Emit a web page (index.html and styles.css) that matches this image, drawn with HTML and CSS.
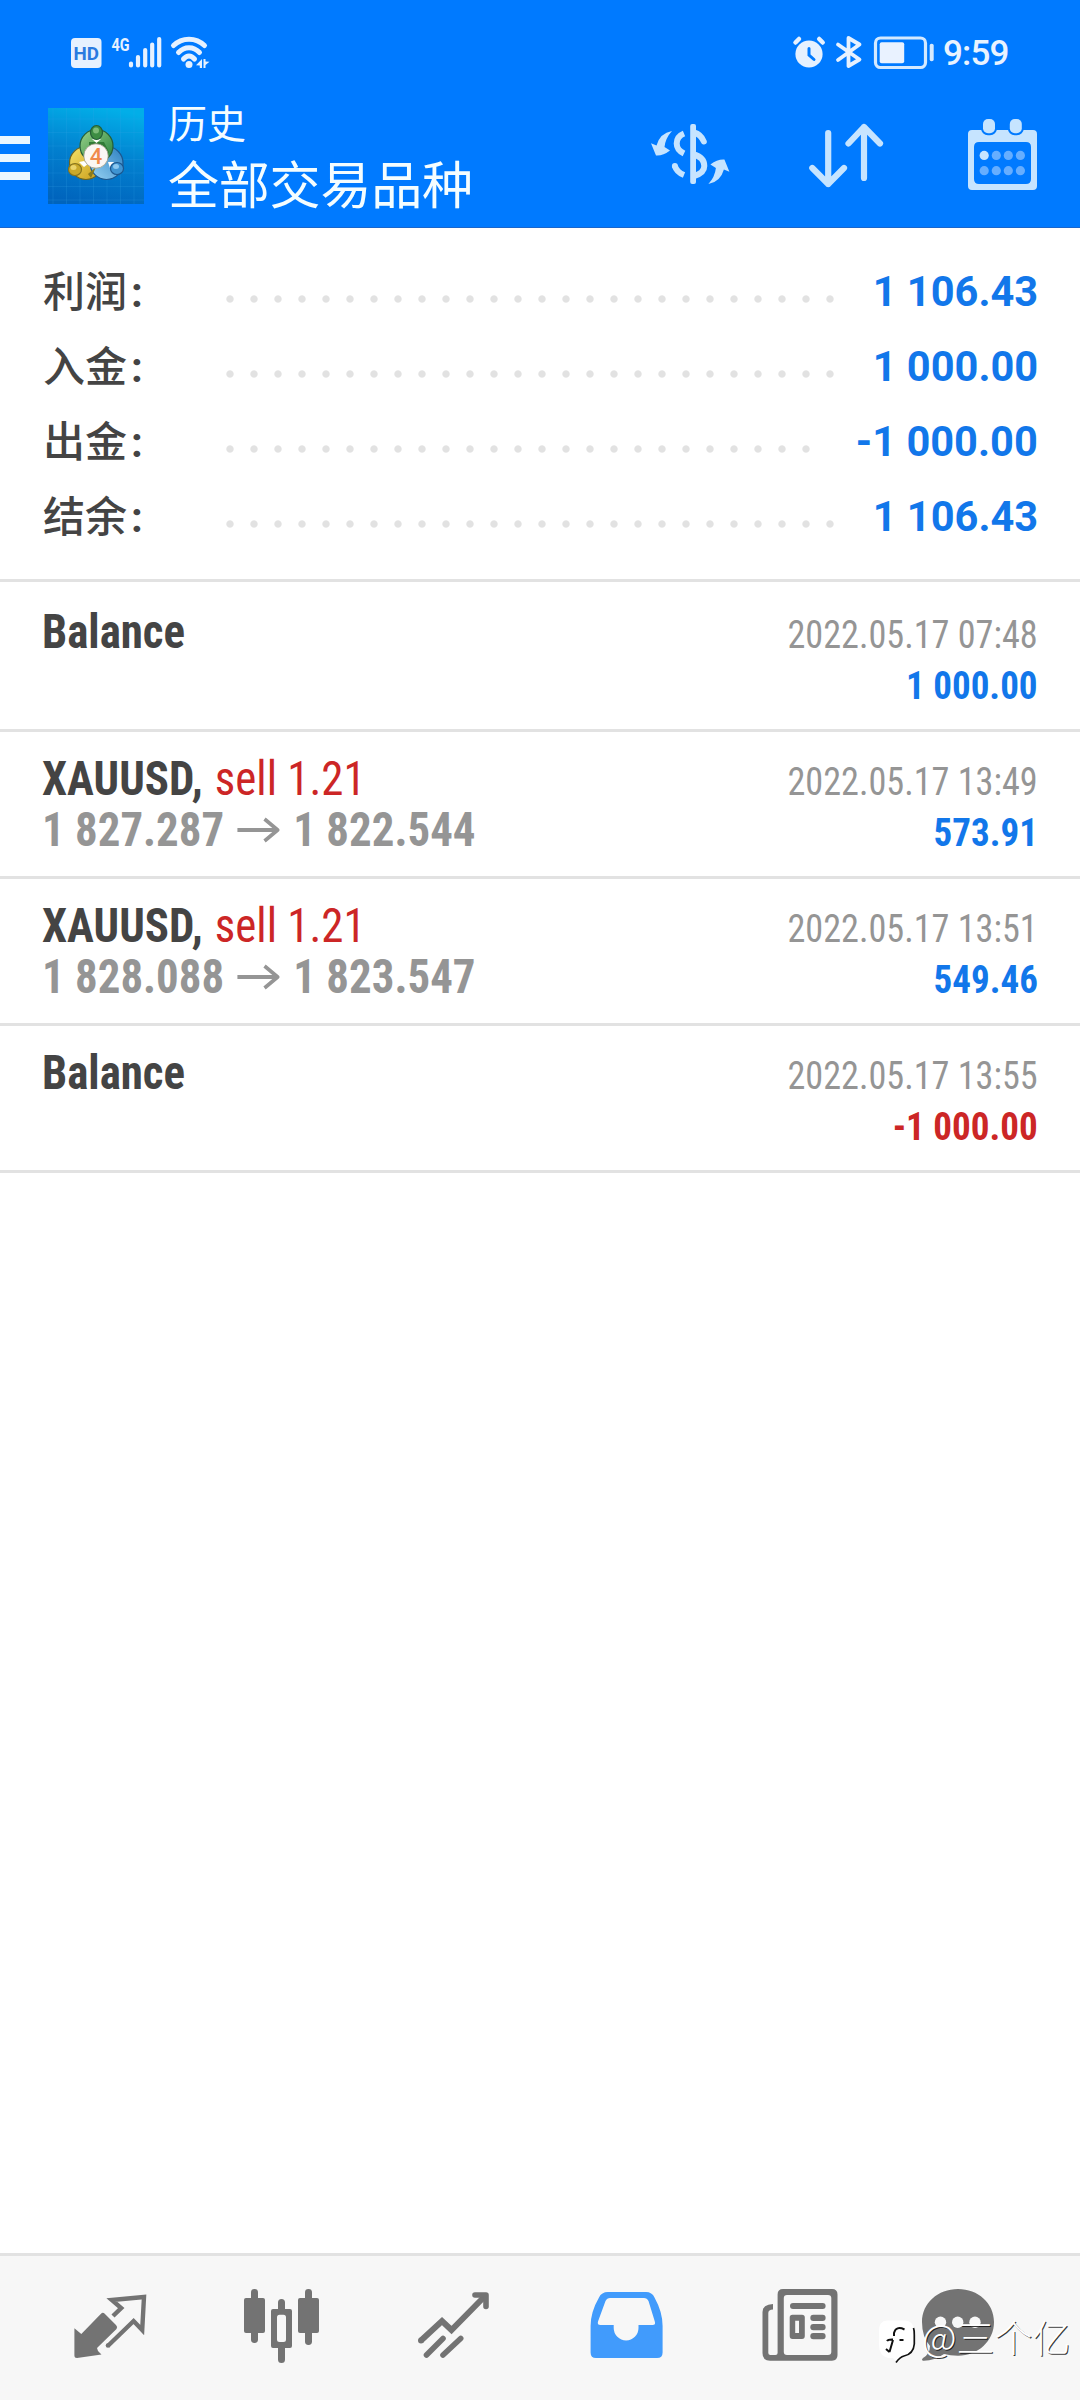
FILE: index.html
```html
<!DOCTYPE html>
<html lang="zh-CN">
<head>
<meta charset="utf-8">
<title>历史</title>
<link rel="stylesheet" href="styles.css">
</head>
<body>
<div class="screen">
  <header class="header">
    <div class="status">
      <svg class="status-left" viewBox="70 30 142 44">
        <rect x="71" y="38" width="30.500" height="30" rx="4" fill="#e6f1ff"/>
        <text class="hd" x="73.500" y="60" textLength="25.500" lengthAdjust="spacingAndGlyphs">HD</text>
        <text class="net" x="111.500" y="50.500" textLength="18" lengthAdjust="spacingAndGlyphs">4G</text>
        <g stroke="#e6f1ff" stroke-width="4.200" stroke-linecap="round">
          <path d="M131 63.500V65.500M138 57V65.500M145.200 50V65.500M152.200 44.500V65.500M159.200 39V65.500"/>
        </g>
        <g fill="none" stroke="#e6f1ff" stroke-width="5" stroke-linecap="round">
          <path d="M173.500 45.500C182 37 196 37 204.500 45.500M178.500 52.500C184.500 46 193.500 46 199.500 52.500M183.500 59C187 55 191 55 194.500 59"/>
        </g>
        <circle cx="189" cy="64.500" r="3.500" fill="#e6f1ff"/>
        <path d="M202 59V68H199.800V65.500L196 65.200ZM203.500 59H205.500V61.500L209.500 61.800L205.500 65V68H203.500Z" fill="#e6f1ff"/>
      </svg>
      <svg class="status-right" viewBox="792 30 144 44">
        <circle cx="809" cy="54" r="13.600" fill="#e6f1ff"/>
        <path d="M809 48.500V55L814 59.500" fill="none" stroke="#007aff" stroke-width="3" stroke-linecap="round"/>
        <path d="M795.500 42.500L799 39M822.700 42.500L819.200 39" stroke="#e6f1ff" stroke-width="4.500" stroke-linecap="round"/>
        <path d="M838 44.500L859.500 59.500L848.500 66V38L859.500 44.500L838 60" fill="none" stroke="#e6f1ff" stroke-width="3.800" stroke-linejoin="round" stroke-linecap="round"/>
        <rect x="875.500" y="38" width="50" height="29.500" rx="5" fill="none" stroke="#d4e9ff" stroke-width="3.200"/>
        <rect x="879.700" y="42.300" width="24.500" height="21" rx="2" fill="#e9f2ff"/>
        <rect x="929.700" y="43.800" width="4" height="17.500" rx="1.800" fill="#d4e9ff"/>
      </svg>
      <span class="clock">9:59</span>
    </div>
    <div class="toolbar">
      <div class="menu"><i></i><i></i><i></i></div>
      <svg class="logo" viewBox="0 0 96 96">
        <defs>
          <linearGradient id="bg" x1=".6" y1="0" x2=".4" y2="1"><stop offset="0" stop-color="#02aee8"/><stop offset=".5" stop-color="#0280cf"/><stop offset="1" stop-color="#0064bd"/></linearGradient>
          <linearGradient id="gr" x1="0" y1="0" x2="1" y2="1"><stop offset="0" stop-color="#9bd28b"/><stop offset="1" stop-color="#23803a"/></linearGradient>
          <linearGradient id="ye" x1="0" y1="0" x2="1" y2="1"><stop offset="0" stop-color="#f4e36a"/><stop offset="1" stop-color="#c99a16"/></linearGradient>
          <linearGradient id="bl" x1="0" y1="1" x2="1" y2="0"><stop offset="0" stop-color="#9ad4f5"/><stop offset="1" stop-color="#2b7fc0"/></linearGradient>
        </defs>
        <rect width="96" height="96" fill="url(#bg)"/>
        <path d="M5 0V96M18.500 0V96M32 0V96M45.500 0V96M59 0V96M72.500 0V96M86 0V96M0 11H96M0 24.500H96M0 38H96M0 51.500H96M0 65H96M0 78.500H96M0 92H96" stroke="#35a6e6" stroke-opacity=".2" fill="none"/>
        <g stroke-width="1.200">
          <circle cx="38" cy="55" r="16.500" fill="url(#ye)" stroke="#6b6424"/>
          <circle cx="58.500" cy="55" r="16.500" fill="url(#bl)" stroke="#1c568d"/>
          <circle cx="48.500" cy="38" r="16.500" fill="url(#gr)" stroke="#255e38"/>
          <path d="M40 66L48 59L43 70Z" fill="#8a7a1c" stroke="none"/>
          <path d="M41 34L56 34L61 44L56 52L41 46Z" fill="#317b36" stroke="none"/>
          <path d="M31 54L36 59L40 56L36 53ZM60 54L66 54L62 60ZM44 31L53 31L48.500 35Z" fill="#fff" stroke="none"/>
          <ellipse cx="48.500" cy="24.500" rx="6" ry="7" fill="#3d8d43" stroke="#255e38"/>
          <ellipse cx="27" cy="61.500" rx="6.500" ry="6" fill="#c9a92a" stroke="#86741e"/>
          <ellipse cx="69" cy="60.500" rx="6.500" ry="6" fill="#3f94d2" stroke="#1c568d"/>
          <ellipse cx="48" cy="22.500" rx="3" ry="3" fill="#7cbb78" stroke="none"/>
          <ellipse cx="25.500" cy="59.500" rx="3" ry="2.500" fill="#ead46a" stroke="none"/>
          <ellipse cx="68" cy="58.500" rx="3" ry="2.500" fill="#8cc8ef" stroke="none"/>
        </g>
        <circle cx="48" cy="48" r="12.200" fill="#fbf7f4" stroke="#9b9a86" stroke-width=".8"/>
        <text class="four" x="48" y="56" text-anchor="middle">4</text>
      </svg>
      <div class="titles"><div class="sub">历史</div><div class="title">全部交易品种</div></div>
      <div class="actions">
        <svg class="act-dollar" viewBox="648 116 84 76">
          <rect x="690.200" y="124" width="5.800" height="60" rx="2" fill="#c6e4ff"/>
          <g fill="none" stroke="#c6e4ff" stroke-width="6">
            <path d="M694 132.500Q701 134.500 703.800 141.500" stroke-linecap="round"/>
            <path d="M694 154.500Q704.300 157.500 704.300 166Q704.300 173 694 176"/>
            <path d="M684 133.500Q676.700 136.500 676.700 143.500Q676.700 150 684 153.500"/>
            <path d="M674.900 166Q676.500 172 684 175"/>
            <path d="M674.900 166V166" stroke-linecap="round"/>
          </g>
          <path id="sw" d="M672 131Q660 133 656.500 145.500L651 143.300L656 155.500Q663 156 670 150.500L664.500 147Q665.500 138 672 131Z" fill="#c6e4ff"/>
          <use href="#sw" transform="rotate(180 690.200 157.500)"/>
        </svg>
        <svg class="act-sort" viewBox="804 116 84 76"><path d="M828.200 133V184M812.300 168L828.200 184L844 168M864 178V127M848.500 143.500L864 127L880 143.500" fill="none" stroke="#c6e4ff" stroke-width="6.200" stroke-linecap="round" stroke-linejoin="round"/></svg>
        <svg class="act-cal" viewBox="964 116 80 76">
          <path fill-rule="evenodd" fill="#c6e4ff" d="M972 130H1033Q1037 130 1037 134V186Q1037 190 1033 190H972Q968 190 968 186V134Q968 130 972 130ZM979 142Q974 142 974 147V179Q974 184 979 184H1026Q1031 184 1031 179V147Q1031 142 1026 142Z"/>
          <g fill="#c6e4ff" stroke="#007aff" stroke-width="4" paint-order="stroke"><rect x="983" y="119" width="12" height="14.300" rx="5"/><rect x="1009.800" y="119" width="12" height="14.300" rx="5"/></g>
          <circle cx="984.200" cy="155.400" r="4.600" fill="#c6e4ff"/>
          <g fill="#66aeff"><circle cx="996.300" cy="155.400" r="4.600"/><circle cx="1008.300" cy="155.400" r="4.600"/><circle cx="1020.400" cy="155.400" r="4.600"/><circle cx="984.200" cy="170.700" r="4.600"/><circle cx="996.300" cy="170.700" r="4.600"/><circle cx="1008.300" cy="170.700" r="4.600"/><circle cx="1020.400" cy="170.700" r="4.600"/></g>
        </svg>
      </div>
    </div>
  </header>

  <section class="summary">
    <div class="sum-row"><span class="label">利润<b>:</b></span><span class="dots"></span><span class="value">1 106.43</span></div>
    <div class="sum-row"><span class="label">入金<b>:</b></span><span class="dots"></span><span class="value">1 000.00</span></div>
    <div class="sum-row"><span class="label">出金<b>:</b></span><span class="dots dots-short"></span><span class="value">-1 000.00</span></div>
    <div class="sum-row"><span class="label">结余<b>:</b></span><span class="dots"></span><span class="value">1 106.43</span></div>
  </section>

  <main class="list">
    <article class="deal deal-first">
      <div class="deal-main"><div class="line"><span class="name">Balance</span></div></div>
      <div class="deal-side"><span class="date">2022.05.17 07:48</span><span class="amount">1 000.00</span></div>
    </article>
    <article class="deal">
      <div class="deal-main"><div class="line"><span class="name">XAUUSD,</span> <span class="side">sell 1.21</span></div>
      <div class="line prices"><span>1 827.287</span><svg class="arrow" viewBox="0 0 46 26"><path d="M1 13H43M30 2L44 13L30 24" fill="none" stroke="#959595" stroke-width="4"/></svg><span>1 822.544</span></div></div>
      <div class="deal-side"><span class="date">2022.05.17 13:49</span><span class="amount">573.91</span></div>
    </article>
    <article class="deal">
      <div class="deal-main"><div class="line"><span class="name">XAUUSD,</span> <span class="side">sell 1.21</span></div>
      <div class="line prices"><span>1 828.088</span><svg class="arrow" viewBox="0 0 46 26"><path d="M1 13H43M30 2L44 13L30 24" fill="none" stroke="#959595" stroke-width="4"/></svg><span>1 823.547</span></div></div>
      <div class="deal-side"><span class="date">2022.05.17 13:51</span><span class="amount">549.46</span></div>
    </article>
    <article class="deal">
      <div class="deal-main"><div class="line"><span class="name">Balance</span></div></div>
      <div class="deal-side"><span class="date">2022.05.17 13:55</span><span class="amount loss">-1 000.00</span></div>
    </article>
  </main>

  <nav class="tabs">
    <svg class="tab" viewBox="65 2280 90 90">
      <path d="M74.400 2328.300L81.300 2334L101 2313.800Q102.600 2312 104.500 2313.500L116 2325Q118 2327 116.500 2329L97 2348L98 2351L101.500 2354.500L77 2358Q74.400 2358 74.400 2355.500Z" fill="#737373"/>
      <path d="M113 2316L121.200 2308L111.800 2300L144 2297L142.200 2330L133.600 2321L107.800 2346" fill="none" stroke="#737373" stroke-width="4.400"/>
      <circle cx="108" cy="2345.500" r="2.300" fill="#737373"/>
    </svg>
    <svg class="tab" viewBox="237 2280 90 90" fill="#737373">
      <rect x="244" y="2298" width="21" height="35" rx="2"/><rect x="251" y="2289" width="7" height="54" rx="3.400"/>
      <path fill-rule="evenodd" d="M273 2309H290Q292 2309 292 2311V2346Q292 2348 290 2348H273Q271 2348 271 2346V2311Q271 2309 273 2309ZM279.500 2314.700Q277 2314.700 277 2317.500V2339.500Q277 2342 279.500 2342H283.500Q286 2342 286 2339.500V2317.500Q286 2314.700 283.500 2314.700Z"/>
      <path d="M278 2310V2302.500A3.500 3.500 0 0 1 285 2302.500V2310ZM278 2347V2359.500A3.500 3.500 0 0 0 285 2359.500V2347Z"/>
      <rect x="298" y="2298" width="21" height="35" rx="2"/><rect x="305" y="2289" width="7" height="56" rx="3.400"/>
    </svg>
    <svg class="tab" viewBox="409 2280 90 90"><g fill="none" stroke="#737373" stroke-width="6"><path d="M421 2340.500L442 2321L451.500 2330L485 2296" stroke-linejoin="miter" /><path d="M475 2295H486V2306.500M426.500 2355L443 2338.500M443 2355L460.700 2338.500" stroke-linejoin="round" stroke-linecap="round" stroke-width="5.600"/><path d="M421 2340.500V2340.500" stroke-linecap="round"/></g></svg>
    <svg class="tab" viewBox="581 2280 90 90"><path fill="#419bfc" fill-rule="evenodd" d="M608 2292H646Q652 2292 654.500 2297.500Q662.600 2312 662.600 2326V2352.500Q662.600 2358 657 2358H596Q590.600 2358 590.600 2352.500V2326Q590.600 2312 599 2297.500Q601.500 2292 608 2292ZM610 2298Q607 2298 605.500 2301L598 2321.500Q597 2325 600.500 2325H613.700V2328A12.400 12.400 0 0 0 638.500 2328V2325H652.500Q656 2325 654.800 2321.500L648.500 2301Q647 2298 644 2298Z"/></svg>
    <svg class="tab" viewBox="753 2280 90 90">
      <g fill="#737373">
      <path fill-rule="evenodd" d="M783 2289H832Q837.500 2289 837.500 2294.500V2355Q837.500 2360.700 832 2360.700H770Q762.500 2360.700 762.500 2353V2312Q762.500 2304.500 773 2304V2309.500Q768.300 2309.500 768.300 2313V2353Q768.300 2355 770.500 2355H775.500Q777.600 2355 777.600 2353V2294.500Q777.600 2289 783 2289ZM787 2295Q783.800 2295 783.800 2298V2352Q783.800 2355 787 2355H828Q831.300 2355 831.300 2352V2298Q831.300 2295 828 2295Z"/>
      <rect x="790" y="2303" width="35.600" height="6" rx="3"/>
      <path fill-rule="evenodd" d="M792.500 2314.700H802Q804.800 2314.700 804.800 2317.500V2336Q804.800 2339 802 2339H792.500Q789.700 2339 789.700 2336V2317.500Q789.700 2314.700 792.500 2314.700ZM795.200 2320.700V2333H799V2320.700Z"/>
      <rect x="810.300" y="2314.700" width="15.300" height="6.200" rx="3"/><rect x="810.300" y="2324" width="15.300" height="6.200" rx="3"/><rect x="810.300" y="2333" width="15.300" height="6.200" rx="3"/>
      </g>
    </svg>
    <svg class="tab tab-chat" viewBox="912 2280 90 90">
      <path d="M958 2289C978 2289 994 2303 994 2322C994 2341 978 2355.700 958 2355.700Q950 2355.700 944 2354Q934 2361 923 2360.700Q921 2360 923 2358Q930 2354 930 2346Q922 2337 922 2322C922 2303 938 2289 958 2289Z" fill="#737373"/>
      <g fill="#f7f7f7"><circle cx="940.500" cy="2322.300" r="5.700"/><circle cx="957.700" cy="2322.300" r="5.700"/><circle cx="975" cy="2322.300" r="5.700"/></g>
    </svg>
  </nav>
  <div class="watermark">
    <svg class="mark" viewBox="876 2316 42 50">
      <path d="M887 2320.500H905Q913.500 2321 914 2330V2345Q913 2355 903 2357L896.500 2362L893 2358H888Q879 2356 879 2345V2330Q879 2321 887 2320.500Z" fill="#fff"/>
      <path d="M913.500 2328Q914.500 2331 914.300 2335V2344Q913.500 2354 904 2356Q900 2357 896 2362.500" fill="none" stroke="#111" stroke-width="1.700"/>
      <path d="M887 2341Q888 2339.300 893 2339.500M899.500 2340H903.500M904.500 2329.500Q896 2325.500 894 2333V2336M893 2340L889.500 2352M886 2349L889.500 2352" fill="none" stroke="#111" stroke-width="2"/>
    </svg>
    <span>@三个亿</span>
  </div>
</div>
</body>
</html>
```
FILE: styles.css
```css
* { box-sizing: border-box; }
body { margin: 0; background: #fff; }
.screen { position: relative; width: 1080px; height: 2400px; display: flex; flex-direction: column; background: #fff; font-family: Roboto, "Noto Sans CJK SC", sans-serif; color: #444; overflow: hidden; }
svg { display: block; flex: none; }

.header { height: 228px; background: #007aff; border-bottom: 1px solid #1a66cc; flex: none; }
.status { height: 104px; padding: 30px 68px 30px 70px; display: flex; align-items: center; }
.status-left { width: 142px; height: 44px; }
.status-right { width: 144px; height: 44px; margin-left: auto; }
.hd { font: 700 19px Roboto, sans-serif; fill: #2a7be0; }
.net { font: 700 19px Roboto, sans-serif; fill: #e6f1ff; }
.clock { width: 76px; padding-left: 7px; font-size: 35px; font-weight: 500; line-height: 44px; padding-top: 3px; color: #e9f3ff; white-space: nowrap; letter-spacing: -.8px; }
.toolbar { height: 123px; display: flex; align-items: flex-start; }
.menu { width: 30px; margin: 32px 18px 0 0; display: flex; flex-direction: column; gap: 10px; }
.menu i { height: 8px; background: #ebf7ff; }
.logo { width: 96px; height: 96px; margin-top: 4px; }
.four { font: 500 22px Roboto, sans-serif; fill: #f08a4b; }
.titles { margin-left: 24px; color: #f4fdff; white-space: nowrap; }
.sub { font-size: 39px; line-height: 44px; margin-top: -1px; }
.title { font-size: 51px; line-height: 60px; margin-top: 10px; letter-spacing: -.2px; }
.actions { display: flex; margin: 12px 36px 0 auto; }
.act-dollar { width: 84px; height: 76px; }
.act-sort { width: 84px; height: 76px; margin-left: 72px; }
.act-cal { width: 80px; height: 76px; margin-left: 76px; }

.summary { height: 354px; padding: 26px 42px 0; border-bottom: 3px solid #e2e2e2; flex: none; }
.sum-row { height: 75px; display: flex; align-items: center; }
.label { width: 184px; padding: 2px 0 0 1px; font-size: 42px; font-weight: 500; line-height: 73px; white-space: nowrap; }
.label b { font-weight: 700; margin-left: 4px; }
.dots { width: 608px; height: 8px; margin-top: 15px; background: radial-gradient(circle at 4px 4px, #e2e2e2 3.2px, rgba(226, 226, 226, 0) 4.1px) 0 0 / 24px 8px; }
.dots-short { width: 584px; }
.value { margin-left: auto; font-size: 42px; font-weight: 700; color: #1277ea; line-height: 75px; transform: scaleX(.99); transform-origin: right; }

.deal { height: 147px; border-bottom: 3px solid #e2e2e2; padding: 21px 42px 0; display: flex; justify-content: space-between; font-stretch: 75%; }
.deal-first { height: 150px; padding-top: 24px; }
.deal-main { transform: scaleX(.935); transform-origin: left; }
.line { height: 51px; line-height: 51px; font-size: 48px; white-space: nowrap; display: flex; align-items: center; }
.name { font-weight: 700; margin-right: 13px; }
.side { color: #cc2626; }
.prices { font-weight: 700; color: #959595; }
.arrow { width: 46px; height: 26px; margin: 0 15px 0 13px; }
.deal-side { display: flex; flex-direction: column; align-items: flex-end; font-size: 39px; line-height: 51px; padding-top: 4px; }
.date { color: #959595; transform: scaleX(.928); transform-origin: right; }
.amount { color: #1277ea; font-weight: 700; transform: scaleX(.95); transform-origin: right; }
.loss { color: #cc2626; }

.tabs { margin-top: auto; height: 147px; padding: 24px 0 0 65px; border-top: 3px solid #e2e2e2; background: #f7f7f7; display: flex; gap: 82px; }
.tab { width: 90px; height: 90px; }
.tab-chat { margin-left: -13px; }
.watermark { position: absolute; left: 876px; top: 2316px; display: flex; }
.mark { width: 42px; height: 50px; }
.watermark span { margin: -2px 0 0 4px; font-family: "Noto Sans CJK SC", sans-serif; font-weight: 300; font-size: 38px; line-height: 44px; color: #fff; text-shadow: 1px 1px 0 rgba(17, 17, 17, .85); white-space: nowrap; }
```
